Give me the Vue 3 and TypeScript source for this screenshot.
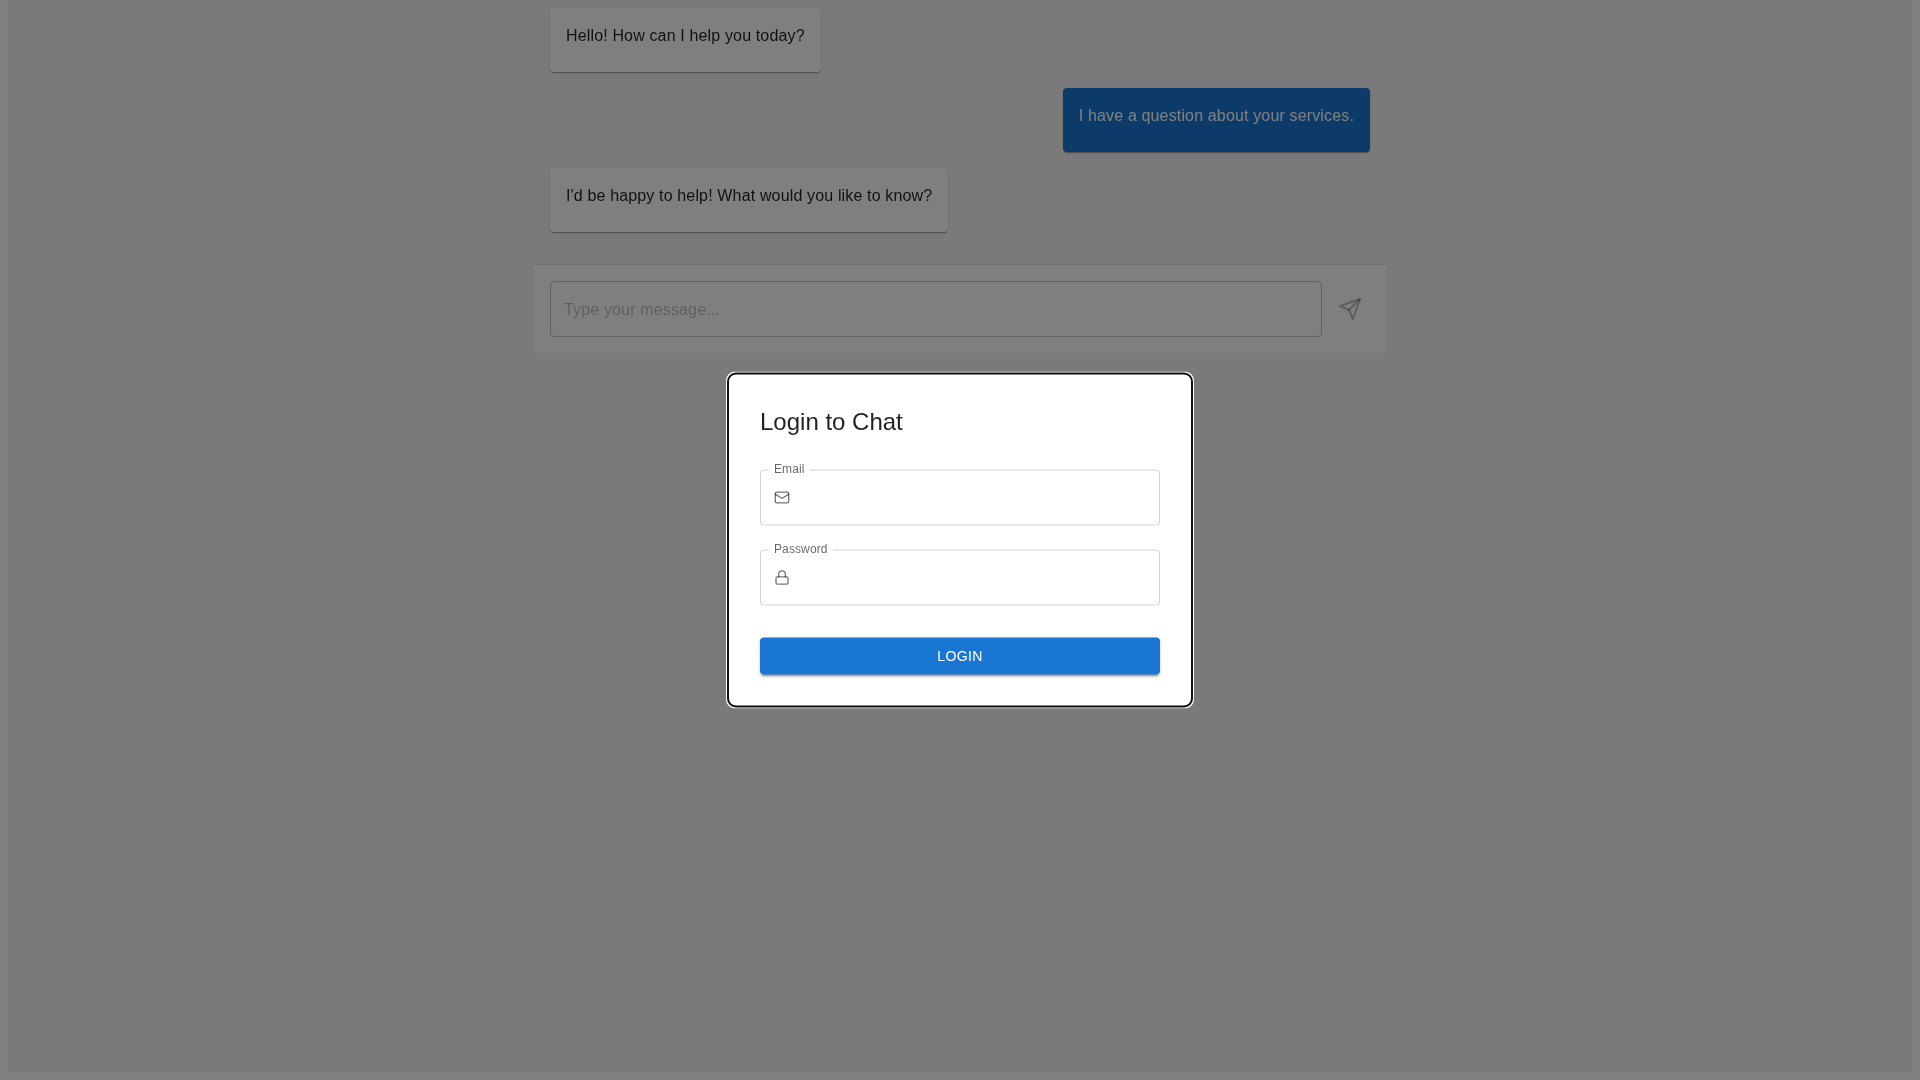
<script setup lang="ts">
interface Message {
  id: number;
  text: string;
  mine: boolean;
}

const messages: Message[] = [
  { id: 1, text: "Hello! How can I help you today?", mine: false },
  { id: 2, text: "I have a question about your services.", mine: true },
  { id: 3, text: "I'd be happy to help! What would you like to know?", mine: false },
];
</script>

<template>
  <div class="page">
    <main class="chat">
      <div class="messages">
        <div v-for="m in messages" :key="m.id" class="row" :class="{ mine: m.mine }">
          <div class="bubble">{{ m.text }}<span class="stamp"></span></div>
        </div>
      </div>
      <div class="composer">
        <div class="composer-field">
          <input class="composer-input" type="text" placeholder="Type your message..." />
        </div>
        <button class="send" type="button" aria-label="Send">
          <svg width="24" height="24" viewBox="0 0 24 24" fill="none" stroke="currentColor" stroke-width="2" stroke-linecap="round" stroke-linejoin="round">
            <path d="M22 2 11 13" />
            <path d="M22 2 15 22 11 13 2 9Z" />
          </svg>
        </button>
      </div>
    </main>

    <div class="backdrop">
      <div class="dialog">
        <h2 class="title">Login to Chat</h2>
        <fieldset class="field">
          <legend class="legend">Email</legend>
          <svg class="icon" width="16" height="16" viewBox="0 0 24 24" fill="none" stroke="currentColor" stroke-width="2" stroke-linecap="round" stroke-linejoin="round">
            <rect x="2" y="4" width="20" height="16" rx="2" />
            <path d="m22 7-8.97 5.7a1.94 1.94 0 0 1-2.06 0L2 7" />
          </svg>
        </fieldset>
        <fieldset class="field second">
          <legend class="legend">Password</legend>
          <svg class="icon" width="16" height="16" viewBox="0 0 24 24" fill="none" stroke="currentColor" stroke-width="2" stroke-linecap="round" stroke-linejoin="round">
            <rect x="3" y="11" width="18" height="11" rx="2" />
            <path d="M7 11V7a5 5 0 0 1 10 0v4" />
          </svg>
        </fieldset>
        <button class="login" type="button">LOGIN</button>
      </div>
    </div>
  </div>
</template>

<style>
html,
body {
  margin: 0;
  background: #fff;
}
</style>

<style scoped>
.page {
  box-sizing: border-box;
  height: 1080px;
  padding: 0 8px 8px;
  overflow: hidden;
  font-family: "Liberation Sans", Arial, sans-serif;
}

.chat {
  box-sizing: border-box;
  height: 100%;
  padding: 8px 526px 0;
  background: #f5f5f5;
}

.messages {
  display: flex;
  flex-direction: column;
  gap: 16px;
  padding: 0 16px;
  will-change: transform;
}

.row {
  display: flex;
  justify-content: flex-start;
}

.row.mine {
  justify-content: flex-end;
}

.bubble {
  padding: 16px;
  border-radius: 4px;
  background: #fff;
  color: rgba(0, 0, 0, 0.87);
  font-size: 16px;
  line-height: 24px;
  letter-spacing: 0.15px;
  box-shadow: 0 2px 1px -1px rgba(0, 0, 0, 0.2), 0 1px 1px rgba(0, 0, 0, 0.14), 0 1px 3px rgba(0, 0, 0, 0.12);
}

.mine .bubble {
  background: #1976d2;
  color: #fff;
}

.stamp {
  display: block;
  height: 8px;
}

.composer {
  display: flex;
  align-items: center;
  gap: 8px;
  margin-top: 32px;
  padding: 16px;
  border-top: 1px solid rgba(0, 0, 0, 0.12);
  background: #fff;
}

.composer-field {
  flex: 1;
  height: 56px;
  box-sizing: border-box;
  border: 1px solid rgba(0, 0, 0, 0.23);
  border-radius: 4px;
  will-change: transform;
}

.composer-input {
  display: block;
  box-sizing: border-box;
  width: 100%;
  height: 100%;
  padding: 2px 13px 0;
  border: 0;
  outline: 0;
  background: transparent;
  color: rgba(0, 0, 0, 0.87);
  font: 16px "Liberation Sans", Arial, sans-serif;
  letter-spacing: 0.15px;
}

.composer-input::placeholder {
  color: rgba(0, 0, 0, 0.26);
  opacity: 1;
}

.send {
  display: flex;
  padding: 8px;
  border: 0;
  border-radius: 50%;
  background: transparent;
  color: rgba(0, 0, 0, 0.26);
}

.backdrop {
  position: fixed;
  inset: 0;
  background: rgba(0, 0, 0, 0.5);
}

.dialog {
  position: absolute;
  top: 50%;
  left: 50%;
  box-sizing: border-box;
  width: 464px;
  padding: 32px 32px 32.5px;
  border-radius: 8px;
  background: #fff;
  outline: -webkit-focus-ring-color auto 1px;
  transform: translate(-50%, -50%);
  will-change: transform;
}

.title {
  margin: 0 0 25px;
  color: rgba(0, 0, 0, 0.87);
  font-size: 24px;
  font-weight: 400;
  line-height: 32px;
}

.field {
  box-sizing: border-box;
  display: flex;
  align-items: center;
  height: 63px;
  margin: 0;
  padding: 0 13px;
  border: 1px solid rgba(0, 0, 0, 0.18);
  border-radius: 4px;
  color: rgba(0, 0, 0, 0.54);
}

.field.second {
  margin-top: 17px;
}

.legend {
  margin-left: -5px;
  padding: 0 5px 2px;
  color: rgba(0, 0, 0, 0.6);
  font-size: 12px;
  line-height: 12px;
  letter-spacing: 0.11px;
}

.icon {
  margin-top: -6px;
}

.login {
  display: block;
  width: 100%;
  height: 37px;
  margin-top: 31.5px;
  border: 0;
  border-radius: 4px;
  background: #1976d2;
  color: #fff;
  font: 500 14px "Liberation Sans", Arial, sans-serif;
  letter-spacing: 0.4px;
  box-shadow: 0 3px 1px -2px rgba(0, 0, 0, 0.2), 0 2px 2px rgba(0, 0, 0, 0.14), 0 1px 5px rgba(0, 0, 0, 0.12);
}
</style>
